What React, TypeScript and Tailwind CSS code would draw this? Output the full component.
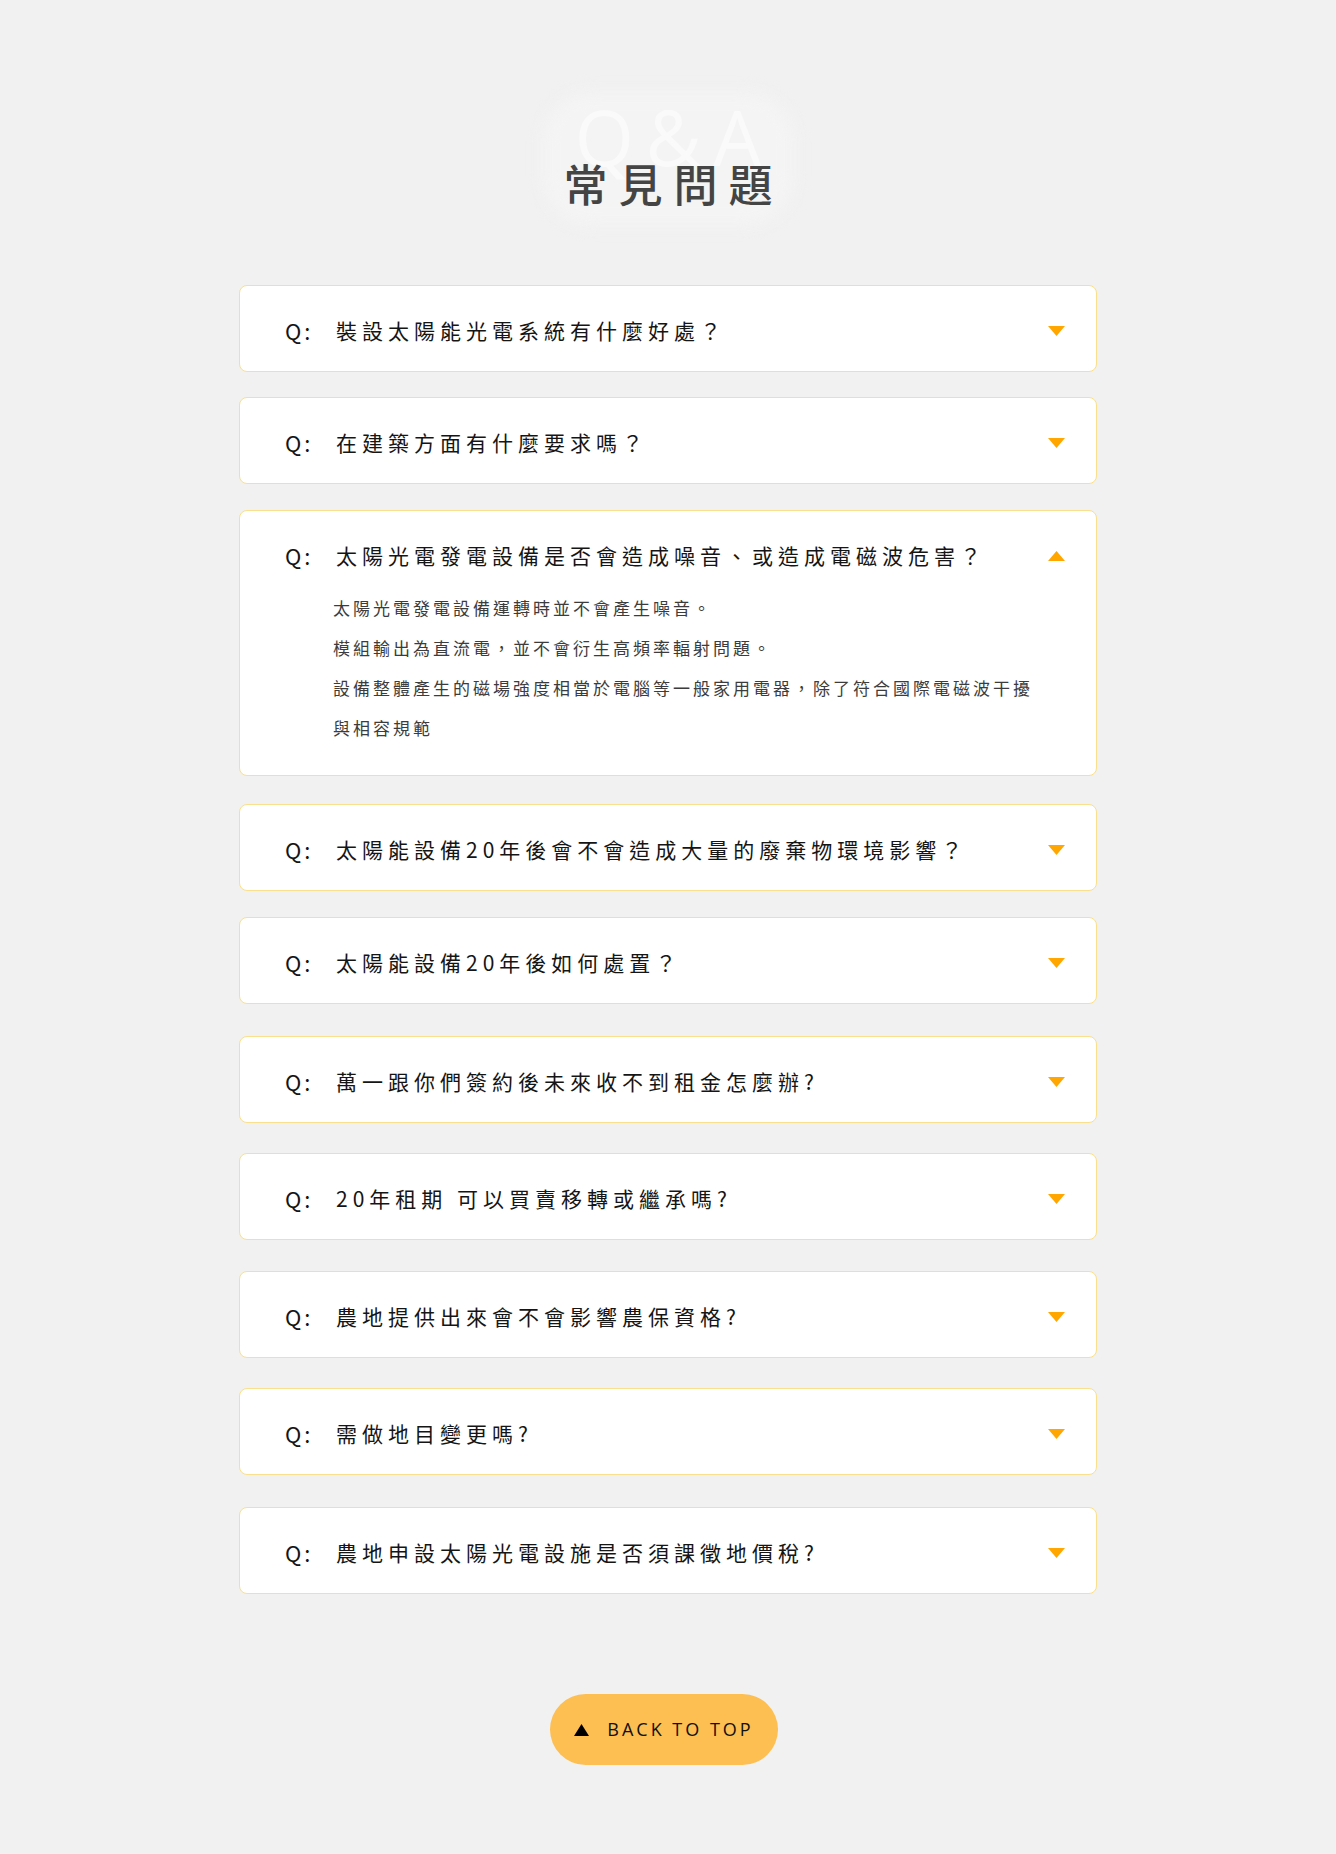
import { useState } from "react";

type Faq = { q: string; a?: string[]; gap: string };

// 每張卡片間距不太一致，照畫面量的
const faqs: Faq[] = [
  { q: "裝設太陽能光電系統有什麼好處？", gap: "mt-0" },
  { q: "在建築方面有什麼要求嗎？", gap: "mt-[25px]" },
  {
    q: "太陽光電發電設備是否會造成噪音、或造成電磁波危害？",
    a: [
      "太陽光電發電設備運轉時並不會產生噪音。",
      "模組輸出為直流電，並不會衍生高頻率輻射問題。",
      "設備整體產生的磁場強度相當於電腦等一般家用電器，除了符合國際電磁波干擾與相容規範",
    ],
    gap: "mt-[26px]",
  },
  { q: "太陽能設備20年後會不會造成大量的廢棄物環境影響？", gap: "mt-[28px]" },
  { q: "太陽能設備20年後如何處置？", gap: "mt-[26px]" },
  { q: "萬一跟你們簽約後未來收不到租金怎麼辦?", gap: "mt-[32px]" },
  { q: "20年租期 可以買賣移轉或繼承嗎?", gap: "mt-[30px]" },
  { q: "農地提供出來會不會影響農保資格?", gap: "mt-[31px]" },
  { q: "需做地目變更嗎?", gap: "mt-[30px]" },
  { q: "農地申設太陽光電設施是否須課徵地價稅?", gap: "mt-[32px]" },
];

const Arrow = ({ up }: { up: boolean }) => (
  <svg width="17" height="10" viewBox="0 0 17 10" className="shrink-0">
    {up ? <polygon points="8.5,0 17,10 0,10" fill="#ffa600" /> : <polygon points="0,0 17,0 8.5,10" fill="#ffa600" />}
  </svg>
);

const FaqItem = ({ item, open, onToggle }: { item: Faq; open: boolean; onToggle: () => void }) => (
  <div className={`${item.gap} bg-white border border-[#fadf8c] rounded-lg`}>
    <button
      onClick={onToggle}
      className="w-full h-[85px] pt-[4px] pl-[45px] pr-[31px] flex items-center text-left text-[#151515]"
    >
      <span className="w-[51px] shrink-0 text-[22px] tracking-[3px]">Q:</span>
      <span className="flex-1 text-[21px] tracking-[5px] leading-none">{item.q}</span>
      <Arrow up={open} />
    </button>
    {open && item.a && (
      <div className="-mt-[8px] pl-[93px] pr-[56px] pb-[27px] text-[17px] leading-[40px] tracking-[3px] text-[#3c3c3c]">
        {item.a.map((line) => (
          <p key={line}>{line}</p>
        ))}
      </div>
    )}
  </div>
);

export default function App() {
  const [openIdx, setOpenIdx] = useState<number | null>(2);

  return (
    <div className="min-h-[1854px] bg-[#f1f1f1] pt-[99px] pb-[88px] font-['Noto_Sans_CJK_TC','Noto_Sans',sans-serif]">
      {/* 標題 */}
      <div className="relative w-fit mx-auto flex flex-col items-center">
        <div className="absolute -inset-x-[10px] -top-[6px] -bottom-[20px] rounded-[48px] bg-[#f4f4f4] blur-sm" />
        <div className="relative text-[76px] leading-none font-normal tracking-[12px] pl-[12px] text-[#fafafa] font-['Open_Sans',sans-serif]">
          Q&amp;A
        </div>
        <h2 className="relative -mt-[14px] text-[44px] leading-none font-medium tracking-[11px] pl-[11px] text-[#444]">
          常見問題
        </h2>
      </div>

      {/* 問題列表 */}
      <div className="w-[858px] mx-auto mt-[80px]">
        {faqs.map((item, i) => (
          <FaqItem
            key={item.q}
            item={item}
            open={openIdx === i}
            onToggle={() => setOpenIdx(openIdx === i ? null : i)}
          />
        ))}
      </div>

      <div className="flex justify-center mt-[100px]">
        <button
          onClick={() => window.scrollTo({ top: 0, behavior: "smooth" })}
          className="h-[71px] w-[228px] -translate-x-[4px] rounded-full bg-[#fdbe52] flex items-center justify-center gap-[18px] text-[18px] tracking-[3px] text-[#111] font-['Open_Sans',sans-serif]"
        >
          <svg width="15" height="12" viewBox="0 0 15 12">
            <polygon points="7.5,0 15,12 0,12" fill="#000" />
          </svg>
          BACK TO TOP
        </button>
      </div>
    </div>
  );
}
